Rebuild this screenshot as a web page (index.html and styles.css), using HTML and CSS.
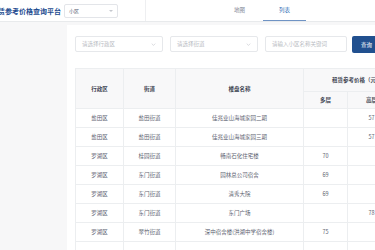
FILE: index.html
```html
<!DOCTYPE html>
<html lang="zh-CN">
<head>
  <meta charset="UTF-8">
  <meta name="viewport" content="width=device-width, initial-scale=1.0">
  <title>租赁参考价格查询平台</title>
  <link rel="stylesheet" href="styles.css">
</head>
<body>
  <!-- 顶部栏 -->
  <header class="topbar">
    <div class="brand">
      <h1 class="title">租赁参考价格查询平台</h1>
      <div class="type-select">
        <span>小区</span>
        <span class="caret"></span>
      </div>
    </div>
    <nav class="tabs">
      <a class="tab">地图</a>
      <a class="tab active">列表</a>
    </nav>
  </header>

  <main class="main">
    <section class="card">
      <!-- 查询条件 -->
      <form class="filters">
        <div class="field select w-88">
          <span>请选择行政区</span>
          <svg class="chev" viewBox="0 0 8 5"><path d="M1 1l3 3 3-3" fill="none" stroke="#b5b8bf" stroke-width="0.8"/></svg>
        </div>
        <div class="field select w-88">
          <span>请选择街道</span>
          <svg class="chev" viewBox="0 0 8 5"><path d="M1 1l3 3 3-3" fill="none" stroke="#b5b8bf" stroke-width="0.8"/></svg>
        </div>
        <div class="field w-83">
          <span>请输入小区名称关键词</span>
        </div>
        <button type="button" class="btn">查询</button>
      </form>

      <!-- 结果表格 -->
      <table class="grid">
        <colgroup>
          <col class="c-district">
          <col class="c-street">
          <col class="c-name">
          <col class="c-low">
          <col class="c-high">
        </colgroup>
        <thead>
          <tr class="h1">
            <th rowspan="2">行政区</th>
            <th rowspan="2">街道</th>
            <th rowspan="2">楼盘名称</th>
            <th colspan="2" class="group">租赁参考价格（元/平方米·月）</th>
          </tr>
          <tr class="h2">
            <th>多层</th>
            <th>高层</th>
          </tr>
        </thead>
        <tbody id="rows"></tbody>
      </table>
    </section>
  </main>

  <script>
    // 表格数据
    const data = [
      ['盐田区', '盐田街道', '佳兆业山海城家园二期', '', '57'],
      ['盐田区', '盐田街道', '佳兆业山海城家园三期', '', '57'],
      ['罗湖区', '桂园街道', '畅南石化住宅楼', '70', ''],
      ['罗湖区', '东门街道', '园林总公司宿舍', '69', ''],
      ['罗湖区', '东门街道', '清秀大院', '69', ''],
      ['罗湖区', '东门街道', '东门广场', '', '78'],
      ['罗湖区', '翠竹街道', '深中宿舍楼(洪湖中学宿舍楼)', '75', ''],
      ['', '', '', '', '']
    ];

    const tbody = document.getElementById('rows');
    tbody.innerHTML = data.map(r =>
      '<tr>' + r.map(c => `<td>${c}</td>`).join('') + '</tr>'
    ).join('');
  </script>
</body>
</html>
```

FILE: styles.css
```css
body {
  margin: 0;
  width: 375px;
  height: 250px;
  overflow: hidden;
  font-family: "Noto Sans CJK SC", "Noto Sans", sans-serif;
  color: #515a6e;
  background: #f7f7f8;
}

/* 顶部栏 */
.topbar {
  height: 21px;
  display: flex;
  align-items: stretch;
  background: #fff;
  border-bottom: 1px solid #e8eaec;
  white-space: nowrap;
}
.brand {
  width: 145px;
  display: flex;
  align-items: center;
  border-right: 1px solid #eeeff1;
}
.title {
  margin: 0 0 0 -9px;
  font-size: 7px;
  font-weight: bold;
  color: #1d4b8f;
}
.type-select {
  margin-left: 3px;
  width: 54px;
  height: 14px;
  box-sizing: border-box;
  border: 1px solid #e3e5e9;
  border-radius: 2px;
  display: flex;
  align-items: center;
  justify-content: space-between;
  padding: 0 4px;
  font-size: 5px;
  color: #515a6e;
}
.caret {
  width: 0;
  height: 0;
  border-left: 2px solid transparent;
  border-right: 2px solid transparent;
  border-top: 2px solid #c5c8ce;
}
.tabs {
  display: flex;
  margin-left: 72px;
  gap: 2px;
}
.tab {
  width: 43px;
  display: flex;
  align-items: center;
  justify-content: center;
  font-size: 5.5px;
  color: #808695;
  box-sizing: border-box;
  border-bottom: 1px solid transparent;
}
.tab.active {
  color: #2d6bb3;
  border-bottom-color: #6f93c4;
}

/* 主体 */
.main {
  padding: 3px 0 0 67px;
}
.card {
  background: #fff;
  padding: 11px 0 0 8px;
  height: 240px;
}
.filters {
  display: flex;
  gap: 7px;
  height: 16px;
  white-space: nowrap;
}
.field {
  box-sizing: border-box;
  height: 16px;
  border: 1px solid #e6e8eb;
  border-radius: 2px;
  display: flex;
  align-items: center;
  padding: 0 6px;
  font-size: 5.5px;
  color: #b9bcc3;
  flex-shrink: 0;
}
.select {
  justify-content: space-between;
}
.w-88 { width: 88px; }
.w-83 { width: 82px; }
.chev {
  width: 5px;
  height: 3px;
}
.btn {
  margin-left: -2px;
  width: 36px;
  height: 17px;
  border: 0;
  border-radius: 2px;
  background: #21508f;
  color: #fff;
  font-family: inherit;
  font-size: 5.5px;
  padding: 0 0 0 9px;
  text-align: left;
  flex-shrink: 0;
}

/* 表格 */
.grid {
  margin-top: 16px;
  border-collapse: collapse;
  table-layout: fixed;
  width: 320px;
  font-size: 5.5px;
  white-space: nowrap;
}
.c-district { width: 48px; }
.c-street { width: 52px; }
.c-name { width: 128px; }
.c-low { width: 44px; }
.c-high { width: 48px; }
.grid th,
.grid td {
  border: 1px solid #eceef0;
  text-align: center;
  padding: 0;
  overflow: hidden;
}
.grid th {
  background: #f8f8f9;
  color: #3f4553;
  font-weight: bold;
}
.grid .h1 th { height: 22px; }
.grid .h2 th { height: 16px; }
.grid .group { text-align: left; padding-left: 28px; }
.grid td {
  height: 18px;
  color: #5c6270;
}
```
